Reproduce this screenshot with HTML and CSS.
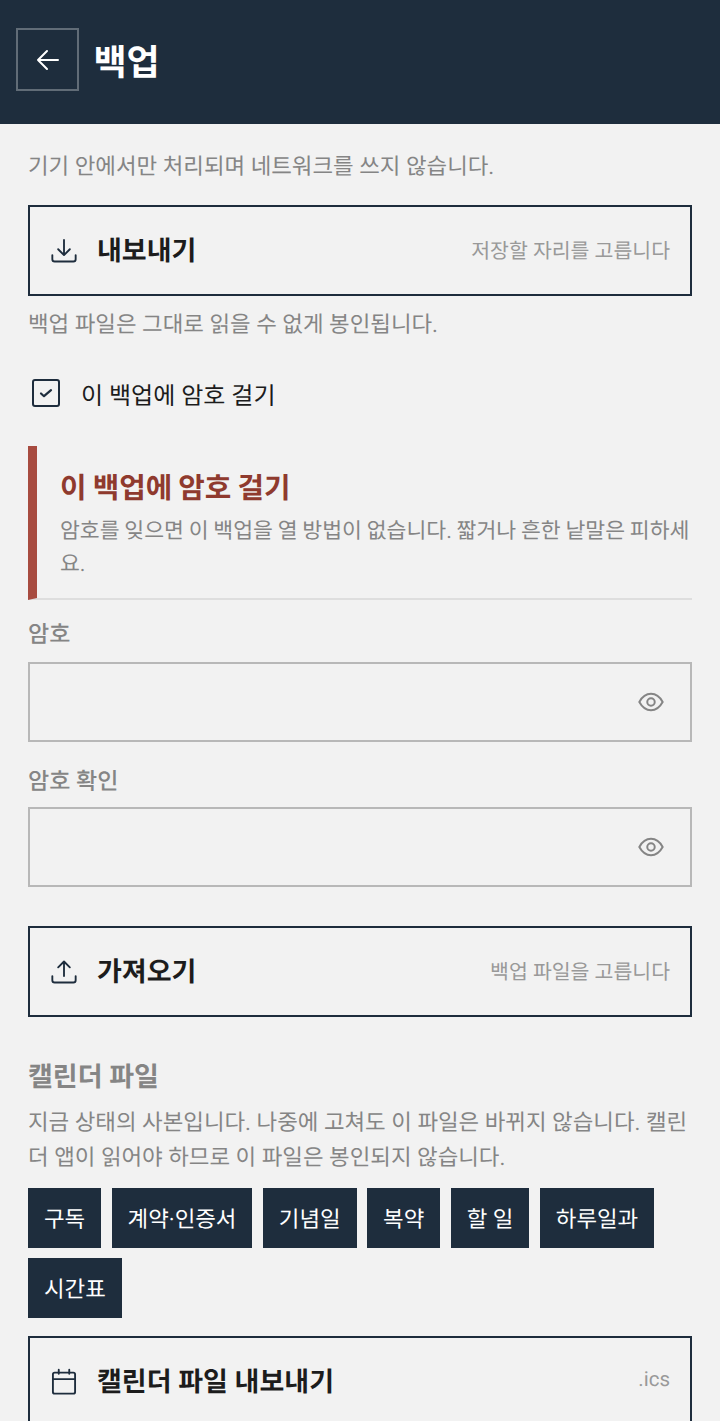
FILE: index.html
```html
<!DOCTYPE html>
<html lang="ko">
<head>
    <meta charset="UTF-8">
    <meta name="viewport" content="width=device-width, initial-scale=1.0">
    <title>백업</title>
    <link rel="stylesheet" href="styles.css">
</head>
<body>
    <header class="topbar">
        <button class="back-btn" type="button" aria-label="뒤로">
            <svg width="28" height="28" viewBox="0 0 28 28" fill="none" stroke="#fff" stroke-width="2" stroke-linecap="round" stroke-linejoin="round"><path d="M24 14H4M13 5l-9 9 9 9"/></svg>
        </button>
        <h1 class="topbar-title">백업</h1>
    </header>

    <main class="content">
        <p class="note note-top">기기 안에서만 처리되며 네트워크를 쓰지 않습니다.</p>

        <button class="action" type="button">
            <svg class="action-icon" width="28" height="28" viewBox="0 0 24 24" fill="none" stroke="#1e2d3d" stroke-width="1.6" stroke-linecap="round" stroke-linejoin="round"><path d="M12 2.500v12.500M7 10.500l5 5 5-5M2 15.500v3.500a2 2 0 0 0 2 2h16a2 2 0 0 0 2-2v-3.500"/></svg>
            <span class="action-label">내보내기</span>
            <span class="action-hint">저장할 자리를 고릅니다</span>
        </button>
        <p class="note note-seal">백업 파일은 그대로 읽을 수 없게 봉인됩니다.</p>

        <label class="check-row">
            <span class="check-box">
                <svg width="16" height="16" viewBox="0 0 16 16" fill="none" stroke="#1e2d3d" stroke-width="2.200" stroke-linecap="round" stroke-linejoin="round"><path d="M3 8.500l3 2.700L13 5.200"/></svg>
            </span>
            <span class="check-label">이 백업에 암호 걸기</span>
        </label>

        <section class="warning">
            <h2 class="warning-title">이 백업에 암호 걸기</h2>
            <p class="warning-text">암호를 잊으면 이 백업을 열 방법이 없습니다. 짧거나 흔한 낱말은 피하세요.</p>
        </section>

        <div class="field field-first">
            <label class="field-label">암호</label>
            <div class="field-input">
                <svg width="28" height="28" viewBox="0 0 24 24" fill="none" stroke="#858585" stroke-width="1.7"><path d="M2 12c2.500-4.600 6-7 10-7s7.500 2.400 10 7c-2.500 4.600-6 7-10 7s-7.500-2.400-10-7z"/><circle cx="12" cy="12" r="3.200"/></svg>
            </div>
        </div>
        <div class="field field-second">
            <label class="field-label">암호 확인</label>
            <div class="field-input">
                <svg width="28" height="28" viewBox="0 0 24 24" fill="none" stroke="#858585" stroke-width="1.7"><path d="M2 12c2.500-4.600 6-7 10-7s7.500 2.400 10 7c-2.500 4.600-6 7-10 7s-7.500-2.400-10-7z"/><circle cx="12" cy="12" r="3.200"/></svg>
            </div>
        </div>

        <button class="action action-import" type="button">
            <svg class="action-icon" width="28" height="28" viewBox="0 0 24 24" fill="none" stroke="#1e2d3d" stroke-width="1.6" stroke-linecap="round" stroke-linejoin="round"><path d="M12 15.500V3M7 8l5-5 5 5M2 15.500v3.500a2 2 0 0 0 2 2h16a2 2 0 0 0 2-2v-3.500"/></svg>
            <span class="action-label">가져오기</span>
            <span class="action-hint">백업 파일을 고릅니다</span>
        </button>

        <h2 class="section-title">캘린더 파일</h2>
        <p class="note note-section">지금 상태의 사본입니다. 나중에 고쳐도 이 파일은 바뀌지 않습니다. 캘린더 앱이 읽어야 하므로 이 파일은 봉인되지 않습니다.</p>

        <div class="chips">
            <span class="chip">구독</span>
            <span class="chip">계약·인증서</span>
            <span class="chip">기념일</span>
            <span class="chip">복약</span>
            <span class="chip">할 일</span>
            <span class="chip">하루일과</span>
            <span class="chip">시간표</span>
        </div>

        <button class="action action-ics" type="button">
            <svg class="action-icon" width="28" height="28" viewBox="0 0 24 24" fill="none" stroke="#1e2d3d" stroke-width="1.6" stroke-linecap="round" stroke-linejoin="round"><rect x="2.500" y="4" width="19" height="18" rx="1.500"/><path d="M2.500 9.500h19M7.500 1.500V5M16.500 1.500V5"/></svg>
            <span class="action-label">캘린더 파일 내보내기</span>
            <span class="action-hint">.ics</span>
        </button>
    </main>
</body>
</html>
```

FILE: styles.css
```css
html, body {
    height: 1421px;
    overflow: hidden;
}
body {
    margin: 0;
    background-color: #f2f2f2;
    font-family: "Roboto", "Noto Sans CJK KR", sans-serif;
    color: #1c1c1c;
    text-rendering: geometricPrecision;
}
p, h1, h2 {
    margin: 0;
}
.topbar {
    height: 124px;
    box-sizing: border-box;
    padding: 28px 16px 0;
    display: flex;
    align-items: flex-start;
    gap: 14.5px;
    background-color: #1e2d3d;
}
.back-btn {
    width: 63px;
    height: 63px;
    padding: 0;
    display: flex;
    align-items: center;
    justify-content: center;
    background: none;
    border: 2px solid rgba(255, 255, 255, 0.3);
}
.topbar-title {
    margin-top: 4px;
    font-size: 36px;
    line-height: 63px;
    font-weight: 700;
    color: #fff;
}
.content {
    padding: 0 28px;
}
.note {
    font-size: 22.4px;
    line-height: 38px;
    color: #858585;
}
.note-top {
    padding-top: 24px;
}
.note-seal {
    margin-top: 10px;
}
.action {
    width: 100%;
    height: 91px;
    box-sizing: border-box;
    margin-top: 19px;
    padding: 0 20px;
    display: flex;
    align-items: center;
    background: none;
    border: 2px solid #1e2d3d;
    font-family: inherit;
    text-align: left;
    text-rendering: inherit;
}
.action-icon {
    flex: none;
}
.action-label {
    flex: 1;
    margin: 0 0 4px 19px;
    font-size: 27px;
    font-weight: 700;
    color: #1c1c1c;
}
.action-hint {
    margin-bottom: 4px;
    font-size: 20.5px;
    color: #999;
}
.check-row {
    margin-top: 25px;
    height: 48px;
    display: flex;
    align-items: center;
}
.check-box {
    width: 28px;
    height: 28px;
    box-sizing: border-box;
    margin-left: 3.5px;
    display: flex;
    align-items: center;
    justify-content: center;
    border: 2px solid #1e2d3d;
    border-radius: 3px;
}
.check-label {
    margin-left: 21.5px;
    font-size: 24px;
    color: #1c1c1c;
}
.warning {
    margin-top: 29px;
    height: 154px;
    box-sizing: border-box;
    padding: 21px 0 0 23px;
    border-left: 9px solid #a74b40;
    border-bottom: 2px solid #dedede;
}
.warning-title {
    font-size: 28.8px;
    line-height: 44px;
    font-weight: 700;
    word-spacing: -1px;
    color: #8f3a2e;
}
.warning-text {
    margin-top: 4px;
    font-size: 21.6px;
    line-height: 33px;
    word-spacing: -0.6px;
    color: #858585;
}
.field-first {
    margin-top: 18px;
}
.field-second {
    margin-top: 23px;
}
.field-label {
    display: block;
    font-size: 23px;
    line-height: 34px;
    font-weight: 500;
    color: #858585;
}
.field-input {
    height: 80px;
    box-sizing: border-box;
    margin-top: 10px;
    padding-right: 25px;
    display: flex;
    align-items: center;
    justify-content: flex-end;
    border: 2px solid #b8b8b8;
}
.field-second .field-input {
    margin-top: 8px;
}
.action-import {
    margin-top: 39px;
}
.section-title {
    margin-top: 40px;
    font-size: 27px;
    line-height: 40px;
    font-weight: 700;
    color: #858585;
}
.note-section {
    margin-top: 9px;
    line-height: 35px;
}
.chips {
    margin-top: 12px;
    display: flex;
    flex-wrap: wrap;
    gap: 10px 10.4px;
}
.chip {
    height: 60px;
    box-sizing: border-box;
    padding: 0 16px;
    display: flex;
    align-items: center;
    background-color: #1e2d3d;
    font-size: 22.4px;
    color: #fff;
}
.action-ics {
    margin-top: 18px;
}
```
